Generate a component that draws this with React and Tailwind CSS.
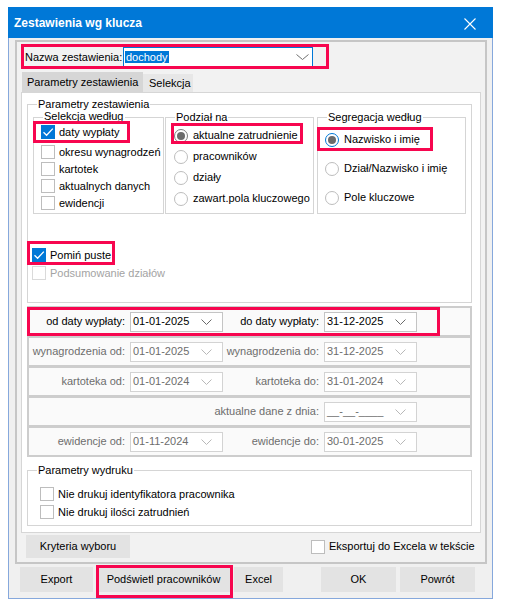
import React from 'react';

// red annotation frame laid over a control
function Mark({ className }) {
  return <div className={`pointer-events-none absolute border-[3px] border-[#f7064f] ${className}`} />;
}

function Check({ checked, disabled }) {
  if (checked) {
    return (
      <span className="w-[14px] h-[14px] shrink-0 bg-[#0078d7] flex items-center justify-center">
        <svg width="14" height="14" viewBox="0 0 14 14">
          <path d="M2.5 7.2 L5.6 10.3 L11.8 3.6" fill="none" stroke="#ffffff" strokeWidth="1.3" />
        </svg>
      </span>
    );
  }
  return (
    <span
      className={`w-[14px] h-[14px] shrink-0 bg-white border ${
        disabled ? 'border-[#dadada]' : 'border-[#bdbdbd]'
      }`}
    />
  );
}

function Radio({ checked, focus }) {
  const ring = checked ? (focus ? 'border-[#0078d7]' : 'border-[#7c7c7c]') : 'border-[#bdbdbd]';
  return (
    <span className={`w-[14px] h-[14px] shrink-0 rounded-full bg-white border ${ring} flex items-center justify-center`}>
      {checked && <span className="w-[8px] h-[8px] rounded-full bg-[#6b6b6b]" />}
    </span>
  );
}

function Chevron({ color, w = 11 }) {
  return (
    <svg width={w} height="6" viewBox={`0 0 ${w} 6`} className="shrink-0">
      <path d={`M0.5 0.5 L${w / 2} 5.5 L${w - 0.5} 0.5`} fill="none" stroke={color} strokeWidth="1" />
    </svg>
  );
}

function DateBox({ value, disabled }) {
  return (
    <div
      className={`w-[93px] h-[20px] shrink-0 bg-white border flex items-center pl-[2px] pr-[10px] ${
        disabled ? 'border-[#d3d3d3] text-[#6d6d6d]' : 'border-[#c4c4c4] text-black'
      }`}
    >
      <span className="flex-1 whitespace-nowrap">{value}</span>
      <Chevron color={disabled ? '#b8b8b8' : '#6a6a6a'} />
    </div>
  );
}

function DateRow({ l1, v1, l2, v2, disabled, children }) {
  const tone = disabled ? 'text-[#6d6d6d]' : 'text-black';
  return (
    <div className="relative h-[27px] bg-[#fafafa] flex items-center">
      <span className={`w-[96px] shrink-0 flex justify-end whitespace-nowrap ${tone}`}>{l1}</span>
      <span className="w-[5px] shrink-0" />
      {v1 ? <DateBox value={v1} disabled={disabled} /> : <span className="w-[93px] shrink-0" />}
      <span className={`w-[96px] shrink-0 flex justify-end whitespace-nowrap ${tone}`}>{l2}</span>
      <span className="w-[5px] shrink-0" />
      <DateBox value={v2} disabled={disabled} />
      {children}
    </div>
  );
}

function Button({ children, className = '' }) {
  return (
    <div className={`relative h-[25px] bg-[#e3e3e3] flex items-center justify-center whitespace-nowrap ${className}`}>
      {children}
    </div>
  );
}

export default function App() {
  return (
    <div className="w-[505px] h-[610px] bg-white pt-[7px] pl-[8px] font-['Liberation_Sans',Arial,sans-serif] text-[11px] leading-[13px] text-black">
      <div className="w-[485px] h-[592px] flex flex-col">
        {/* title bar */}
        <div className="h-[31px] bg-[#0078d7] flex items-center justify-between pl-[6px] pr-[17px] pt-[2px]">
          <span className="text-white font-bold text-[12px]">Zestawienia wg klucza</span>
          <svg width="12" height="12" viewBox="0 0 12 12">
            <path d="M0.5 0.5 L11.5 11.5 M11.5 0.5 L0.5 11.5" stroke="#ffffff" strokeWidth="1.1" />
          </svg>
        </div>

        <div className="flex-1 bg-[#f0f0f0] border-x border-b border-[#86a8dc] pl-[6px] pt-[2px]">
          <div className="w-[472px] h-[524px] border-2 border-[#c6c6c6] bg-[#f2f2f2] flex flex-col">
            {/* report name */}
            <div className="relative self-start mt-[5px] ml-[8px] h-[20px] flex items-center">
              <span className="w-[98px] whitespace-nowrap">Nazwa zestawienia:</span>
              <div className="w-[190px] h-[20px] bg-white border border-[#0078d7] flex items-center pl-[1px] pr-[3px]">
                <span className="flex-1">
                  <span className="bg-[#0078d7] text-white px-[1px]">dochody</span>
                </span>
                <Chevron color="#707070" w={13} />
              </div>
              <Mark className="-left-[4px] -top-[3px] -right-[16px] -bottom-[2px]" />
            </div>

            {/* tabs */}
            <div className="mt-[5px] ml-[5px] flex items-end">
              <div className="w-[121px] h-[20px] bg-[#d6d6d6] pl-[5px] flex items-center">Parametry zestawienia</div>
              <div className="w-[50px] h-[18px] bg-[#e7e7e7] pl-[6px] flex items-center">Selekcja</div>
            </div>

            <div className="ml-[4px] w-[460px] h-[441px] border border-[#d6d6d6] bg-white flex flex-col">
              <fieldset className="mt-[5px] ml-[5px] w-[445px] h-[205px] border border-[#d5d5d5]">
                <legend className="ml-[9px] px-[1px] leading-[13px]">Parametry zestawienia</legend>

                <div className="ml-[5px] flex items-start">
                  <fieldset className="mt-[1px] w-[131px] h-[102px] border border-[#d5d5d5]">
                    <legend className="ml-[9px] px-[1px]">
                      <span className="block h-[11px] overflow-hidden">
                        <span className="block -mt-[2px] leading-[13px]">Selekcja według</span>
                      </span>
                    </legend>
                    <div className="mt-[2px] ml-[7px] flex flex-col gap-[3px]">
                      <div className="relative h-[14px] mb-[3px] flex items-center gap-[4px]">
                        <Check checked />
                        <span>daty wypłaty</span>
                        <Mark className="-left-[8px] -top-[4px] w-[97px] h-[22px]" />
                      </div>
                      <div className="h-[14px] flex items-center gap-[4px]">
                        <Check />
                        <span className="whitespace-nowrap">okresu wynagrodzeń</span>
                      </div>
                      <div className="h-[14px] flex items-center gap-[4px]">
                        <Check />
                        <span>kartotek</span>
                      </div>
                      <div className="h-[14px] flex items-center gap-[4px]">
                        <Check />
                        <span>aktualnych danych</span>
                      </div>
                      <div className="h-[14px] flex items-center gap-[4px]">
                        <Check />
                        <span>ewidencji</span>
                      </div>
                    </div>
                  </fieldset>

                  <fieldset className="ml-[1px] w-[149px] h-[103px] border border-[#d5d5d5]">
                    <legend className="ml-[9px] px-[1px] leading-[13px]">Podział na</legend>
                    <div className="mt-[1px] ml-[8px] flex flex-col">
                      <div className="relative h-[21px] flex items-center gap-[5px]">
                        <Radio checked />
                        <span className="whitespace-nowrap">aktualne zatrudnienie</span>
                        <Mark className="-left-[3px] -top-[2px] w-[132px] h-[21px]" />
                      </div>
                      <div className="h-[21px] flex items-center gap-[5px]">
                        <Radio />
                        <span>pracowników</span>
                      </div>
                      <div className="h-[21px] flex items-center gap-[5px]">
                        <Radio />
                        <span>działy</span>
                      </div>
                      <div className="h-[21px] flex items-center gap-[5px]">
                        <Radio />
                        <span className="whitespace-nowrap">zawart.pola kluczowego</span>
                      </div>
                    </div>
                  </fieldset>

                  <fieldset className="ml-[3px] w-[149px] h-[103px] border border-[#d5d5d5]">
                    <legend className="ml-[9px] px-[1px] leading-[13px]">Segregacja według</legend>
                    <div className="mt-[1px] ml-[7px] flex flex-col">
                      <div className="relative h-[29px] flex items-center gap-[5px]">
                        <Radio checked focus />
                        <span>Nazwisko i imię</span>
                        <Mark className="-left-[8px] top-[2px] w-[116px] h-[24px]" />
                      </div>
                      <div className="h-[29px] flex items-center gap-[5px]">
                        <Radio />
                        <span>Dział/Nazwisko i imię</span>
                      </div>
                      <div className="h-[29px] flex items-center gap-[5px]">
                        <Radio />
                        <span>Pole kluczowe</span>
                      </div>
                    </div>
                  </fieldset>
                </div>

                <div className="relative mt-[34px] ml-[4px] h-[14px] flex items-center gap-[4px]">
                  <Check checked />
                  <span>Pomiń puste</span>
                  <Mark className="-left-[5px] -top-[7px] w-[88px] h-[24px]" />
                </div>
                <div className="mt-[4px] ml-[4px] h-[14px] flex items-center gap-[4px]">
                  <Check disabled />
                  <span className="text-[#a3a3a3]">Podsumowanie działów</span>
                </div>
              </fieldset>

              {/* date ranges */}
              <div className="mt-[3px] ml-[5px] w-[445px] bg-[#cdcdcd] p-[2px] flex flex-col gap-[3px]">
                <DateRow l1="od daty wypłaty:" v1="01-01-2025" l2="do daty wypłaty:" v2="31-12-2025">
                  <Mark className="-left-[2px] -top-[1px] w-[413px] h-[29px]" />
                </DateRow>
                <DateRow disabled l1="wynagrodzenia od:" v1="01-01-2025" l2="wynagrodzenia do:" v2="31-12-2025" />
                <DateRow disabled l1="kartoteka od:" v1="01-01-2024" l2="kartoteka do:" v2="31-01-2024" />
                <DateRow disabled l1="" v1="" l2="aktualne dane z dnia:" v2="__-__-____" />
                <DateRow disabled l1="ewidencje od:" v1="01-11-2024" l2="ewidencje do:" v2="30-01-2025" />
              </div>

              <fieldset className="mt-[7px] ml-[5px] w-[445px] h-[62px] border border-[#d5d5d5]">
                <legend className="ml-[9px] px-[1px] leading-[13px]">Parametry wydruku</legend>
                <div className="mt-[8px] ml-[12px] flex flex-col">
                  <div className="h-[18px] flex items-center gap-[4px]">
                    <Check />
                    <span>Nie drukuj identyfikatora pracownika</span>
                  </div>
                  <div className="h-[18px] flex items-center gap-[4px]">
                    <Check />
                    <span>Nie drukuj ilości zatrudnień</span>
                  </div>
                </div>
              </fieldset>
            </div>

            <div className="mt-[2px] ml-[9px] h-[23px] flex items-center">
              <div className="w-[104px] h-[23px] bg-[#e3e3e3] flex items-center justify-center">Kryteria wyboru</div>
              <div className="ml-[181px] flex items-center gap-[4px]">
                <Check />
                <span className="whitespace-nowrap">Eksportuj do Excela w tekście</span>
              </div>
            </div>
          </div>

          {/* dialog buttons */}
          <div className="mt-[3px] ml-[5px] flex items-center">
            <Button className="w-[73px]">Export</Button>
            <Button className="ml-[4px] w-[133px]">
              Podświetl pracowników
              <Mark className="-left-[1px] -top-[2px] w-[137px] h-[33px]" />
            </Button>
            <Button className="ml-[4px] w-[49px]">Excel</Button>
            <Button className="ml-[38px] w-[75px]">OK</Button>
            <Button className="ml-[4px] w-[75px]">Powrót</Button>
          </div>
        </div>
      </div>
    </div>
  );
}
